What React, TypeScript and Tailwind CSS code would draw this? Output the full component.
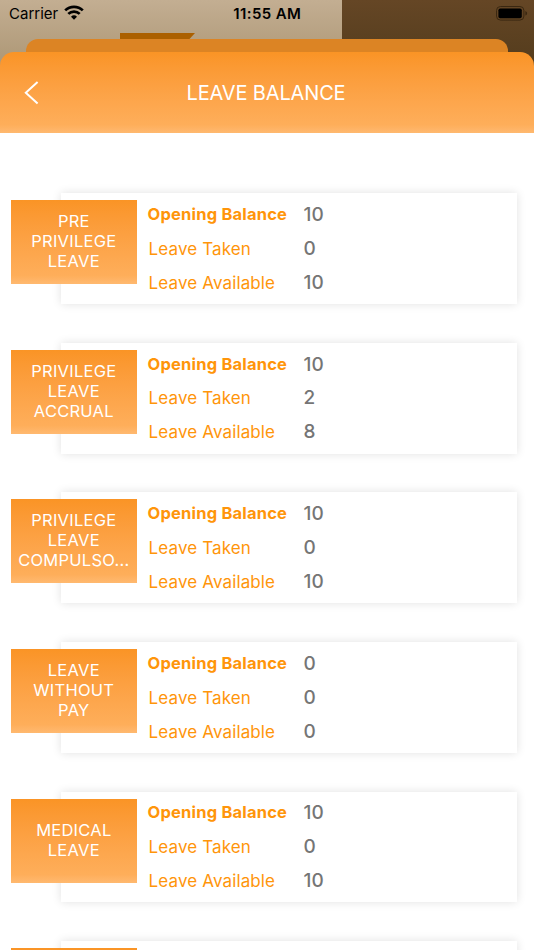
interface LeaveBalance {
  name: string[];
  opening: number;
  taken: number;
  available: number;
}

const balances: LeaveBalance[] = [
  { name: ['PRE', 'PRIVILEGE', 'LEAVE'], opening: 10, taken: 0, available: 10 },
  { name: ['PRIVILEGE', 'LEAVE', 'ACCRUAL'], opening: 10, taken: 2, available: 8 },
  { name: ['PRIVILEGE', 'LEAVE', 'COMPULSO...'], opening: 10, taken: 0, available: 10 },
  { name: ['LEAVE', 'WITHOUT', 'PAY'], opening: 0, taken: 0, available: 0 },
  { name: ['MEDICAL', 'LEAVE'], opening: 10, taken: 0, available: 10 },
];

function WifiIcon() {
  return (
    <svg viewBox="0 0 20 15" className="h-[15px] w-5" fill="none" stroke="#000" strokeWidth="2.7">
      <path d="M1.2 5.4a12.6 12.6 0 0 1 17.6 0" />
      <path d="M4.3 8.9a8.2 8.2 0 0 1 11.4 0" />
      <path d="M10 14.8 7 11.7a4.3 4.3 0 0 1 6 0Z" fill="#000" stroke="none" />
    </svg>
  );
}

function BatteryIcon() {
  return (
    <svg viewBox="0 0 32 15" className="h-[15px] w-8" fill="none">
      <rect x="0.5" y="0.5" width="27.4" height="13.6" rx="4" stroke="#3a2711" />
      <rect x="2.4" y="2.4" width="23.4" height="9.8" rx="1.8" fill="#000" />
      <path d="M29.4 5v4.6c1-.4 1.7-1.3 1.7-2.3s-.7-1.9-1.7-2.3Z" fill="#3a2711" />
    </svg>
  );
}

function StatusBar() {
  return (
    <div className="flex h-[39px] text-[15px] leading-[18px] text-black">
      <div className="flex flex-1 items-start gap-1.5 pt-[5px] pl-[9px]">
        <span>Carrier</span>
        <WifiIcon />
      </div>
      <span className="pt-[5px] pr-[2.5px] text-center font-semibold tracking-[0.4px]">11:55 AM</span>
      <div className="flex flex-1 justify-end pt-1.5 pr-[6px]">
        <BatteryIcon />
      </div>
    </div>
  );
}

function Header() {
  return (
    <header className="flex h-[81px] shrink-0 items-center rounded-t-[14px] bg-linear-to-b from-[#fa9425] via-[#feae5a] via-90% to-[#ffb970]">
      <button className="w-[60px] pl-6" aria-label="Back">
        <svg viewBox="0 0 16 24" className="h-6 w-4" fill="none" stroke="#fff" strokeWidth="2">
          <path d="M13.6 1 1.8 11.8l11.8 10.8" />
        </svg>
      </button>
      <h1 className="flex-1 pr-[62px] text-center text-[20px] tracking-[-0.15px] text-white">LEAVE BALANCE</h1>
    </header>
  );
}

function LeaveCard({ item }: { item?: LeaveBalance }) {
  return (
    <li className="flex h-[149.65px] shrink-0 items-start pl-[61px]">
      <div className="flex h-[110.8px] w-[456px] bg-white pt-[7px] shadow-[0_0_9px_rgba(0,0,0,0.12)]">
        <div className="-ml-[50.4px] flex h-[84px] w-[126.4px] flex-col items-center justify-center bg-linear-to-b from-[#fa9425] via-[#feae5a] via-90% to-[#ffb970] pb-[2px] text-[16.5px] leading-5 tracking-[0.25px] text-white">
          {item?.name.map((line) => (
            <span key={line} className="whitespace-nowrap">{line}</span>
          ))}
        </div>
        {item && (
          <dl className="grid auto-rows-[33.9px] grid-cols-[155px_auto] content-start pt-[0.8px] pl-[11.5px] text-[17px] leading-[28.6px] tracking-[0.13px] text-[#ff950a]">
            <dt className="-ml-px text-[16.5px] leading-[27px] font-bold tracking-[0.2px]">Opening Balance</dt>
            <dd className="text-[19px] font-[550] text-[#757575]">{item.opening}</dd>
            <dt>Leave Taken</dt>
            <dd className="text-[19px] font-[550] text-[#757575]">{item.taken}</dd>
            <dt>Leave Available</dt>
            <dd className="text-[19px] font-[550] text-[#757575]">{item.available}</dd>
          </dl>
        )}
      </div>
    </li>
  );
}

export default function App() {
  return (
    <div className="relative h-[950px] w-[534px] overflow-hidden bg-white font-['Inter',sans-serif]">
      {/* Dimmed screen behind the stacked sheets */}
      <div className="absolute inset-x-0 top-0 flex h-[80px]">
        <div className="w-[342px] bg-linear-to-b from-[#c3ae92] to-[#a8926f]" />
        <div className="flex-1 bg-linear-to-b from-[#654625] to-[#503a1b]" />
      </div>
      <svg viewBox="0 0 76 6" className="absolute top-[32.5px] left-[120px] h-1.5 w-[76px]">
        <path d="M0 0h75l-5.5 6H0Z" fill="#ab6000" />
      </svg>

      <div className="relative flex h-full flex-col">
        <StatusBar />
        <div className="mx-[26px] h-[27px] shrink-0 rounded-t-[12px] bg-[#dc8424]" />
        <div className="-mt-[14px] flex min-h-0 flex-1 flex-col">
          <Header />
          <ul className="flex min-h-0 flex-1 flex-col overflow-hidden bg-white pt-[60.1px]">
            {balances.map((item) => (
              <LeaveCard key={item.name.join(' ')} item={item} />
            ))}
            {/* Next entry, cut off by the bottom edge */}
            <LeaveCard />
          </ul>
        </div>
      </div>
    </div>
  );
}
